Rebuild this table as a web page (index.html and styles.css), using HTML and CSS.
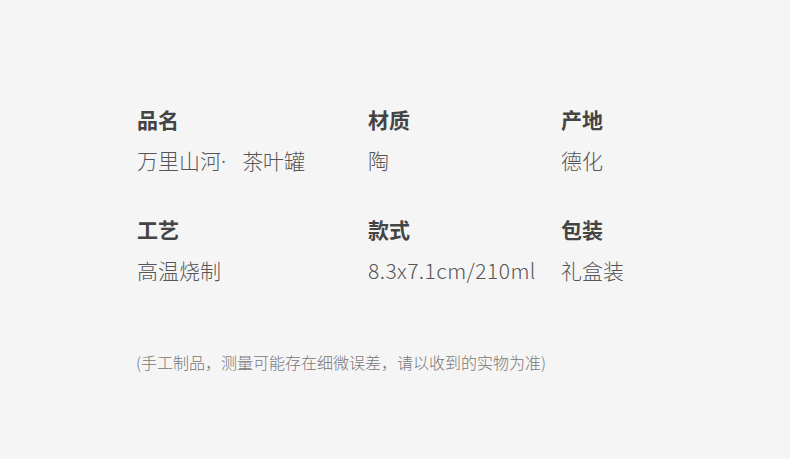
FILE: index.html
```html
<!DOCTYPE html>
<html>
<head>
    <title>商品参数</title>
    <link rel="stylesheet" href="styles.css">
</head>
<body>
    <div class="specs">
        <div class="spec-grid">
            <div class="spec">
                <div class="spec-label">品名</div>
                <div class="spec-value">万里山河<span class="dot">·</span>茶叶罐</div>
            </div>
            <div class="spec">
                <div class="spec-label">材质</div>
                <div class="spec-value">陶</div>
            </div>
            <div class="spec">
                <div class="spec-label">产地</div>
                <div class="spec-value">德化</div>
            </div>
            <div class="spec">
                <div class="spec-label">工艺</div>
                <div class="spec-value">高温烧制</div>
            </div>
            <div class="spec">
                <div class="spec-label">款式</div>
                <div class="spec-value latin">8.3x7.1cm/210ml</div>
            </div>
            <div class="spec">
                <div class="spec-label">包装</div>
                <div class="spec-value">礼盒装</div>
            </div>
        </div>
        <p class="note">(手工制品，测量可能存在细微误差，请以收到的实物为准)</p>
    </div>
</body>
</html>
```

FILE: styles.css
```css
body { margin: 0; background: #f5f5f5; font-family: "Noto Sans CJK SC", "Noto Sans", sans-serif; color: #555; }
.specs { padding: 104px 0 0 137px; }
.spec-grid { display: grid; grid-template-columns: 231px 193px 160px; row-gap: 38px; }
.spec { display: flex; flex-direction: column; gap: 11px; }
.spec-label { font-size: 21px; line-height: 30px; font-weight: bold; color: #444; }
.spec-value { font-size: 21px; line-height: 30px; font-weight: 300; color: #555; }
.spec-value.latin { letter-spacing: 0.45px; }
.dot { font-family: "Noto Sans", sans-serif; margin: 0 16px 0 0; }
.note { margin: 65px 0 0 -1px; font-size: 16px; line-height: 24px; font-weight: 300; color: #777; }
```
